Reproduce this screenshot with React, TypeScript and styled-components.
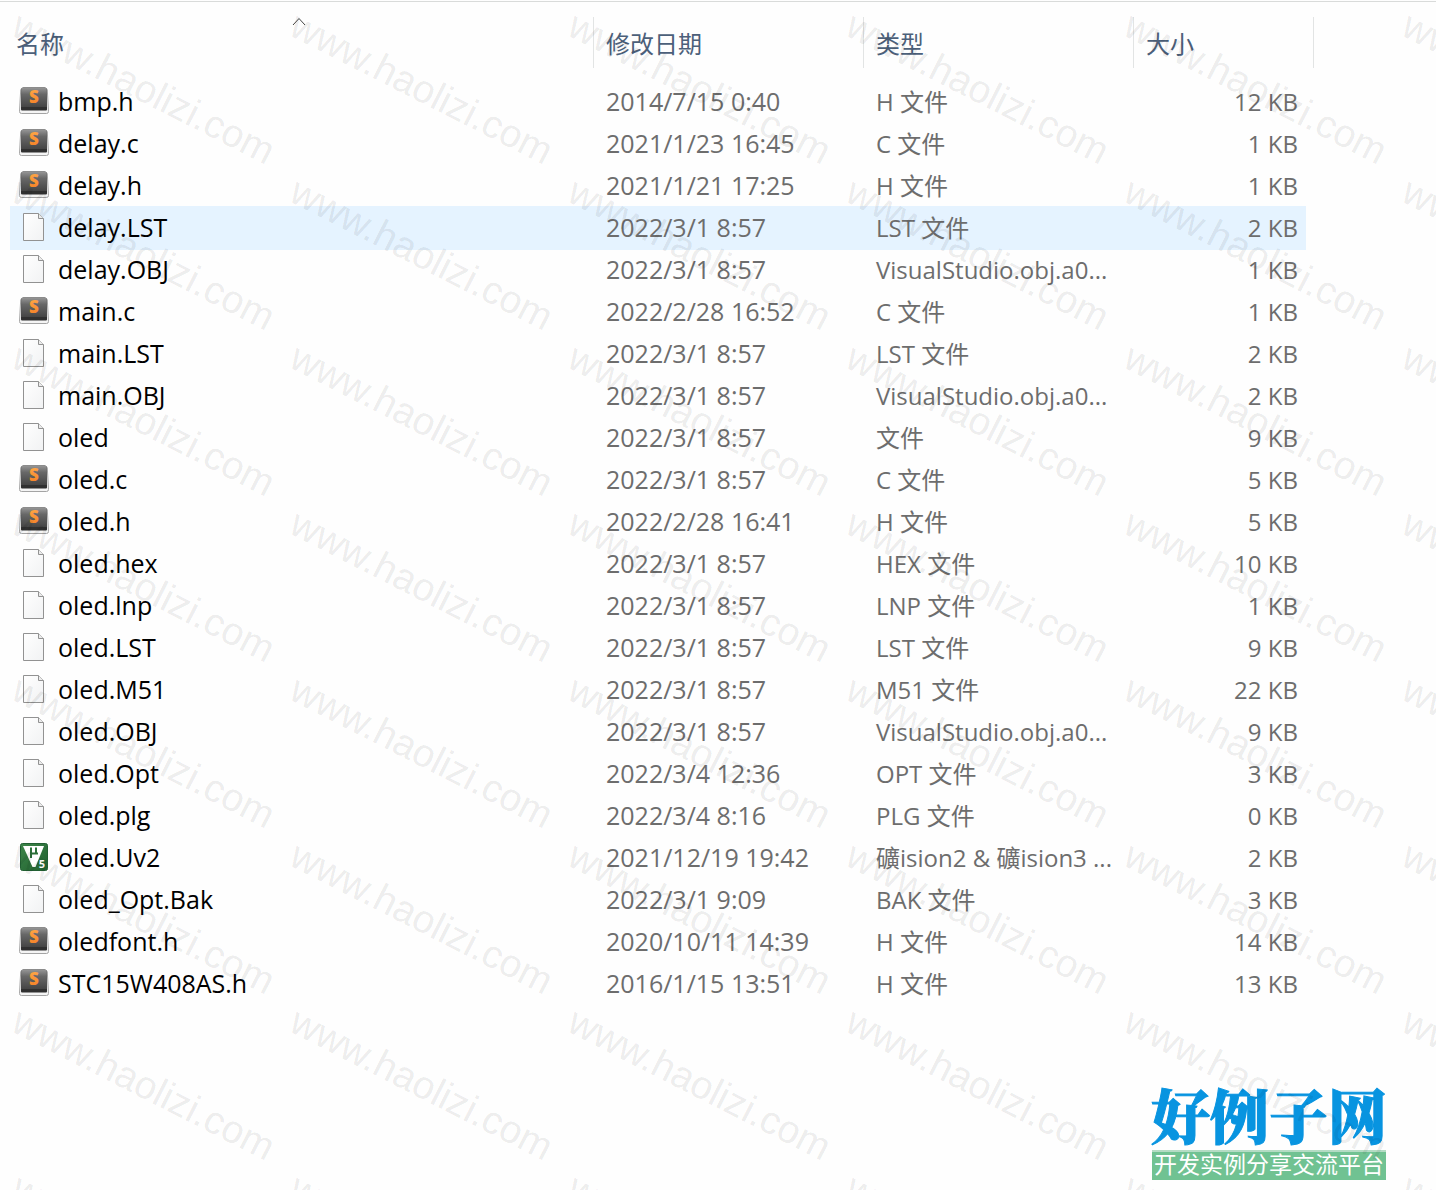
import React from "react";
import styled, { createGlobalStyle } from "styled-components";

type IconKind = "sublime" | "blank" | "uvision";

interface FileEntry {
  name: string;
  date: string;
  type: string;
  size: string;
  icon: IconKind;
  hovered?: boolean;
}

const files: FileEntry[] = [
  { name: "bmp.h", date: "2014/7/15 0:40", type: "H 文件", size: "12 KB", icon: "sublime" },
  { name: "delay.c", date: "2021/1/23 16:45", type: "C 文件", size: "1 KB", icon: "sublime" },
  { name: "delay.h", date: "2021/1/21 17:25", type: "H 文件", size: "1 KB", icon: "sublime" },
  { name: "delay.LST", date: "2022/3/1 8:57", type: "LST 文件", size: "2 KB", icon: "blank", hovered: true },
  { name: "delay.OBJ", date: "2022/3/1 8:57", type: "VisualStudio.obj.a0...", size: "1 KB", icon: "blank" },
  { name: "main.c", date: "2022/2/28 16:52", type: "C 文件", size: "1 KB", icon: "sublime" },
  { name: "main.LST", date: "2022/3/1 8:57", type: "LST 文件", size: "2 KB", icon: "blank" },
  { name: "main.OBJ", date: "2022/3/1 8:57", type: "VisualStudio.obj.a0...", size: "2 KB", icon: "blank" },
  { name: "oled", date: "2022/3/1 8:57", type: "文件", size: "9 KB", icon: "blank" },
  { name: "oled.c", date: "2022/3/1 8:57", type: "C 文件", size: "5 KB", icon: "sublime" },
  { name: "oled.h", date: "2022/2/28 16:41", type: "H 文件", size: "5 KB", icon: "sublime" },
  { name: "oled.hex", date: "2022/3/1 8:57", type: "HEX 文件", size: "10 KB", icon: "blank" },
  { name: "oled.lnp", date: "2022/3/1 8:57", type: "LNP 文件", size: "1 KB", icon: "blank" },
  { name: "oled.LST", date: "2022/3/1 8:57", type: "LST 文件", size: "9 KB", icon: "blank" },
  { name: "oled.M51", date: "2022/3/1 8:57", type: "M51 文件", size: "22 KB", icon: "blank" },
  { name: "oled.OBJ", date: "2022/3/1 8:57", type: "VisualStudio.obj.a0...", size: "9 KB", icon: "blank" },
  { name: "oled.Opt", date: "2022/3/4 12:36", type: "OPT 文件", size: "3 KB", icon: "blank" },
  { name: "oled.plg", date: "2022/3/4 8:16", type: "PLG 文件", size: "0 KB", icon: "blank" },
  { name: "oled.Uv2", date: "2021/12/19 19:42", type: "礦ision2 & 礦ision3 ...", size: "2 KB", icon: "uvision" },
  { name: "oled_Opt.Bak", date: "2022/3/1 9:09", type: "BAK 文件", size: "3 KB", icon: "blank" },
  { name: "oledfont.h", date: "2020/10/11 14:39", type: "H 文件", size: "14 KB", icon: "sublime" },
  { name: "STC15W408AS.h", date: "2016/1/15 13:51", type: "H 文件", size: "13 KB", icon: "sublime" },
];

const GlobalStyle = createGlobalStyle`
  * { box-sizing: border-box; }
  body {
    margin: 0;
    background: #fefefe;
    font-family: "Open Sans", "Noto Sans CJK SC", sans-serif;
    font-size: 24px;
    line-height: 36px;
  }
`;

const Page = styled.div`
  position: relative;
  display: flex;
  flex-direction: column;
  min-height: 100vh;
  padding-top: 1px;
  overflow: hidden;
`;

const Listing = styled.main`
  border-top: 1px solid #d9dbda;
  padding: 15px 122px 0 4px;
`;

const FileTable = styled.table`
  display: block;
`;

const Head = styled.thead`
  display: block;
  margin-bottom: 13px;
`;

const Body = styled.tbody`
  display: block;
  margin: 0 8px 0 6px;
`;

const HeadRow = styled.tr`
  display: grid;
  grid-template-columns: minmax(0, 1fr) 270px 270px 180px;
`;

const HeadCell = styled.th`
  height: 51px;
  padding: 0;
  border-right: 1px solid #e2e4e4;
  font-weight: 400;
`;

const SortButton = styled.button`
  display: flex;
  flex-direction: column;
  width: 100%;
  padding: 0 0 0 12px;
  border: 0;
  background: none;
  color: #4c607a;
  font: inherit;
  text-align: left;
`;

const CaretSlot = styled.span`
  display: flex;
  justify-content: center;
  width: 100%;
  height: 9px;
  padding-right: 12px;
`;

const Row = styled.tr<{ $hovered?: boolean }>`
  display: grid;
  grid-template-columns: minmax(0, 1fr) 270px 270px 172px;
  height: 42px;
  background: ${(p) => (p.$hovered ? "#e5f3ff" : "transparent")};
  box-shadow: ${(p) => (p.$hovered ? "0 -1px #e5f3ff, 0 1px #e5f3ff" : "none")};
`;

const Cell = styled.td<{ $align?: "left" | "right" }>`
  padding: 3px 8px 3px 12px;
  color: #6d6d6d;
  text-align: ${(p) => p.$align ?? "left"};
  white-space: nowrap;
`;

const DateCell = styled(Cell)`
  font-size: 25px;
  line-height: 34px;
`;

const NameCell = styled.td`
  display: flex;
  align-items: center;
  gap: 9px;
  padding: 0 0 2px 9px;
  color: #000;
  font-size: 25px;
  white-space: nowrap;
`;

const IconBox = styled.span`
  display: flex;
  justify-content: center;
  width: 30px;
`;

const Watermark = styled.div`
  position: absolute;
  inset: 0;
  display: grid;
  grid-template-columns: repeat(6, 278px);
  grid-auto-rows: 166px;
  padding: 1px 0 0 8px;
  overflow: hidden;
  pointer-events: none;
  color: rgba(0, 0, 0, 0.085);
  font: 39px/40px "Liberation Sans", Arial, sans-serif;
`;

const WatermarkText = styled.span`
  height: 40px;
  white-space: nowrap;
  transform: rotate(27deg);
  transform-origin: 0 36px;
`;

const SiteBadge = styled.aside`
  position: absolute;
  right: 50px;
  bottom: 10px;
  width: 234px;
  text-align: center;
  white-space: nowrap;
`;

const SiteName = styled.div`
  display: flex;
  justify-content: center;
  margin-bottom: 4px;
  color: #0894e0;
  font: 900 59px/64px "Noto Serif CJK SC", "Noto Sans CJK SC", sans-serif;
  -webkit-text-stroke: 1px #0894e0;
`;

const SiteTagline = styled.div`
  display: flex;
  justify-content: center;
  padding-bottom: 6px;
  border-top: 2px solid #b4dcc4;
  background: #70c292;
  color: #fff;
  font: 23px/22px "Noto Sans CJK SC", sans-serif;
`;

function SublimeIcon() {
  return (
    <svg width="30" height="28" viewBox="0 0 30 28" aria-hidden="true">
      <defs>
        <linearGradient id="keyTop" x1="0" y1="0" x2="0" y2="1">
          <stop offset="0" stopColor="#979797" />
          <stop offset="0.35" stopColor="#686868" />
          <stop offset="1" stopColor="#454545" />
        </linearGradient>
        <linearGradient id="keyLetter" x1="0" y1="0" x2="0" y2="1">
          <stop offset="0" stopColor="#ffb04f" />
          <stop offset="1" stopColor="#f47a20" />
        </linearGradient>
      </defs>
      <path
        d="M4 1h22q2 0 2.300 2L29.500 24.500q0 2-2 2h-25q-2 0-2-2L1.700 3Q2 1 4 1z"
        fill="#f4f4f4"
        stroke="#a4a4a4"
      />
      <path d="M4.500 .500h21q2 0 2.200 2L28 20v2.500q0 1-1 1h-24q-1 0-1-1v-2.500L2.300 2.500q.2-2 2.200-2z" fill="#303030" />
      <path d="M4.500 .500h21q2 0 2.200 2L28 20H2L2.300 2.500q.2-2 2.200-2z" fill="url(#keyTop)" />
      <text
        x="15"
        y="16"
        textAnchor="middle"
        fontFamily="Open Sans, sans-serif"
        fontWeight="800"
        fontSize="17"
        fill="url(#keyLetter)"
      >
        S
      </text>
    </svg>
  );
}

function BlankFileIcon() {
  return (
    <svg width="22" height="28" viewBox="0 0 22 28" aria-hidden="true">
      <defs>
        <linearGradient id="paper" x1="0" y1="0" x2="1" y2="1">
          <stop offset="0" stopColor="#fff" />
          <stop offset="1" stopColor="#f1f2f3" />
        </linearGradient>
      </defs>
      <path d="M.5.500H15.500L20.500 5.500V27.500H.5z" fill="url(#paper)" stroke="#929292" />
      <path d="M15.500.500V5.500H20.500" fill="#ececec" stroke="#929292" />
    </svg>
  );
}

function UVisionIcon() {
  return (
    <svg width="28" height="28" viewBox="0 0 28 28" aria-hidden="true">
      <defs>
        <linearGradient id="uvGreen" x1="0" y1="0" x2="1" y2="1">
          <stop offset="0" stopColor="#3d8549" />
          <stop offset="1" stopColor="#20602f" />
        </linearGradient>
      </defs>
      <rect x=".5" y=".5" width="27" height="27" rx="2" fill="url(#uvGreen)" stroke="#226033" />
      <path d="M3 3H24L15.500 24H12.500z" fill="#fff" />
      <path d="M11 4.500V15M16 4.500V10.500H18M11 10.500H16" fill="none" stroke="#2b7039" strokeWidth="2" />
      <text x="22" y="25" textAnchor="middle" fontFamily="Open Sans, sans-serif" fontWeight="700" fontSize="11" fill="#fff">
        5
      </text>
    </svg>
  );
}

const icons: Record<IconKind, () => React.JSX.Element> = {
  sublime: SublimeIcon,
  blank: BlankFileIcon,
  uvision: UVisionIcon,
};

function SortCaret() {
  return (
    <svg width="14" height="9" viewBox="0 0 14 9" aria-hidden="true">
      <path d="M1 8L7 1.500L13 8" fill="none" stroke="#444" />
    </svg>
  );
}

const columns = ["名称", "修改日期", "类型", "大小"];
const stamps = Array.from({ length: 48 }, (_, i) => i);

export default function App() {
  return (
    <Page>
      <GlobalStyle />
      <Listing>
        <FileTable>
          <Head>
            <HeadRow>
              {columns.map((label, i) => (
                <HeadCell key={label} scope="col" aria-sort={i === 0 ? "ascending" : "none"}>
                  <SortButton type="button">
                    <CaretSlot>{i === 0 && <SortCaret />}</CaretSlot>
                    {label}
                  </SortButton>
                </HeadCell>
              ))}
            </HeadRow>
          </Head>
          <Body>
            {files.map((file) => {
              const Icon = icons[file.icon];
              return (
                <Row key={file.name} $hovered={file.hovered}>
                  <NameCell>
                    <IconBox>
                      <Icon />
                    </IconBox>
                    {file.name}
                  </NameCell>
                  <DateCell>{file.date}</DateCell>
                  <Cell>{file.type}</Cell>
                  <Cell $align="right">{file.size}</Cell>
                </Row>
              );
            })}
          </Body>
        </FileTable>
      </Listing>
      <SiteBadge>
        <SiteName>好例子网</SiteName>
        <SiteTagline>开发实例分享交流平台</SiteTagline>
      </SiteBadge>
      <Watermark aria-hidden="true">
        {stamps.map((n) => (
          <WatermarkText key={n}>www.haolizi.com</WatermarkText>
        ))}
      </Watermark>
    </Page>
  );
}
